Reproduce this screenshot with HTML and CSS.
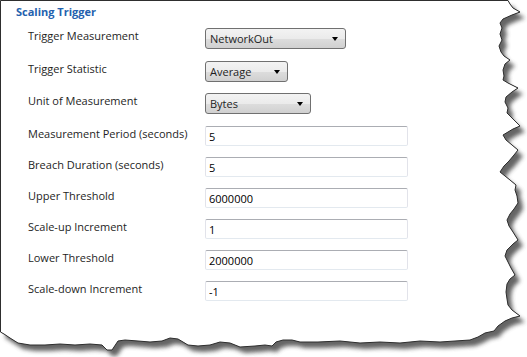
FILE: index.html
```html
<!DOCTYPE html>
<html lang="en">
<head>
    <meta charset="UTF-8">
    <title>Scaling Trigger</title>
    <link rel="stylesheet" href="styles.css">
</head>
<body>
    <div class="sheet">
        <!-- torn paper outline + shadow, sits under the form -->
        <svg class="paper" width="527" height="357" viewBox="0 0 527 357">
            <defs>
                <filter id="blur" x="-10%" y="-10%" width="120%" height="120%">
                    <feGaussianBlur stdDeviation="2.2"/>
                </filter>
            </defs>
            <path id="edge" d="M0.5,0.5 H508 L510,4 L513,8 L520,12 L512,15 L503,19 L500,23 L502,28 L500,34 L502,40 L499,46 L501,52 L504,56 L510,60 L505,64 L503,70 L504,76 L503,80 L508,83 L514,86 L518,88 L512,92 L506,97 L505,102 L508,108 L507,113 L512,118 L516,122 L520,126 L513,129 L508,132 L503,135 L506,140 L512,145 L518,150 L514,155 L509,161 L504,166 L500,172 L505,176 L510,180 L516,185 L515,190 L517,196 L518,203 L514,209 L510,214 L507,220 L509,226 L513,232 L518,240 L513,244 L507,250 L505,256 L508,262 L511,268 L515,275 L510,279 L507,284 L506,292 L507,299 L508,305 L512,310 L520,316 L512,318 L505,321 L498,326 L494,331 L485,333 L478,337 L470,340 L455,341 L440,342 L420,341 L400,343 L380,342 L360,343 L340,341 L318,342 L300,342 L292,340 L283,340 L276,342 L272,346 L265,345 L255,346 L240,347 L230,343 L220,342 L210,345 L198,346 L188,345 L178,339 L170,338 L162,341 L150,342 L138,341 L125,340 L118,341 L112,350 L107,350 L102,345 L90,344 L75,345 L60,344 L45,345 L30,345 L18,343 L10,338 L4,334 L0.5,332 Z"/>
            <use href="#edge" class="shadow" transform="translate(5,6)" filter="url(#blur)"/>
            <use href="#edge" class="outline"/>
        </svg>

        <div class="panel">
            <h2 class="title">Scaling Trigger</h2>
            <div class="form">
                <label>Trigger Measurement</label>
                <div class="select wide"><span>NetworkOut</span></div>

                <label>Trigger Statistic</label>
                <div class="select short"><span>Average</span></div>

                <label>Unit of Measurement</label>
                <div class="select mid"><span>Bytes</span></div>

                <label>Measurement Period (seconds)</label>
                <input type="text" value="5">

                <label>Breach Duration (seconds)</label>
                <input type="text" value="5">

                <label>Upper Threshold</label>
                <input type="text" value="6000000">

                <label>Scale-up Increment</label>
                <input type="text" value="1">

                <label>Lower Threshold</label>
                <input type="text" value="2000000">

                <label>Scale-down Increment</label>
                <input type="text" value="-1">
            </div>
        </div>
    </div>
</body>
</html>
```

FILE: styles.css
```css
body {
    margin: 0;
    background-color: #ffffff;
    font-family: "Open Sans", "Noto Sans", sans-serif;
    font-size: 11px;
    color: #1e1e1e;
}

.sheet {
    position: relative;
    width: 527px;
    height: 357px;
    overflow: hidden;
}

.paper {
    position: absolute;
    top: 0;
    left: 0;
    z-index: 0;
}

.paper .shadow {
    fill: #4a4a4a;
    opacity: 0.85;
}

.paper .outline {
    fill: #ffffff;
    stroke: #2e2e2e;
    stroke-width: 1;
}

.panel {
    position: relative;
    z-index: 1;
    padding: 4px 0 0 16px;
}

.title {
    margin: 0;
    font-size: 11px;
    line-height: 16px;
    font-weight: bold;
    color: #2361ae;
}

.form {
    display: grid;
    grid-template-columns: 177px 203px;
    grid-template-rows: 22px 21px 22px repeat(6, 20px);
    row-gap: 11px;
    margin: 8px 0 0 12px;
    align-items: start;
}

.form label {
    line-height: 16px;
    white-space: nowrap;
}

.select {
    position: relative;
    height: 21px;
    border: 1px solid #707070;
    border-radius: 3px;
    background: linear-gradient(#f3f3f3 0%, #ebebeb 50%, #dddddd 51%, #d0d0d0 100%);
    box-sizing: border-box;
    padding-left: 4px;
    line-height: 19px;
}

.select::after {
    content: "";
    position: absolute;
    right: 7px;
    top: 8px;
    border-left: 3.5px solid transparent;
    border-right: 3.5px solid transparent;
    border-top: 4px solid #000000;
}

.select.wide {
    width: 141px;
}

.select.short {
    width: 83px;
}

.select.mid {
    width: 106px;
}

.form input {
    width: 203px;
    height: 20px;
    box-sizing: border-box;
    margin: 0;
    padding: 0 3px;
    border: 1px solid #e2e3ea;
    border-top-color: #abadb3;
    border-bottom-color: #e3e9ef;
    border-radius: 2px;
    font-family: inherit;
    font-size: 11px;
    color: #000000;
    background: #ffffff;
    outline: none;
}
```
